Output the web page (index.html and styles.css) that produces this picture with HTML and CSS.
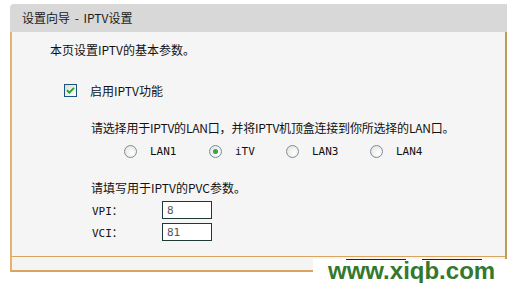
FILE: index.html
```html
<!DOCTYPE html>
<html lang="zh-CN">
  <head>
    <meta charset="UTF-8" />
    <title>设置向导 - IPTV设置</title>
    <link rel="stylesheet" href="styles.css">
  </head>
  <body>
    <div class="panel">
      <div class="head">设置向导 - IPTV设置</div>
      <div class="content">
        <p class="intro">本页设置IPTV的基本参数。</p>

        <label class="check-row">
          <svg class="check" width="13" height="13" viewBox="0 0 13 13">
            <defs>
              <linearGradient id="cb" x1="0" y1="0" x2="1" y2="1">
                <stop offset="0" stop-color="#dcdcd6" />
                <stop offset="1" stop-color="#ffffff" />
              </linearGradient>
            </defs>
            <rect x="0.5" y="0.5" width="12" height="12" fill="url(#cb)" stroke="#1c5180" />
            <path d="M3 6.2 L5.3 8.6 L10 3.9" fill="none" stroke="#21a121" stroke-width="1.8" />
          </svg>
          <span>启用IPTV功能</span>
        </label>

        <p class="hint">请选择用于IPTV的LAN口，并将IPTV机顶盒连接到你所选择的LAN口。</p>
        <div class="radios">
          <label class="radio"><span class="dot"></span>LAN1</label>
          <label class="radio"><span class="dot on"></span>iTV</label>
          <label class="radio"><span class="dot"></span>LAN3</label>
          <label class="radio"><span class="dot"></span>LAN4</label>
        </div>

        <p class="hint pvc">请填写用于IPTV的PVC参数。</p>
        <div class="field">
          <span class="field-label">VPI：</span>
          <input class="box" value="8" />
        </div>
        <div class="field">
          <span class="field-label">VCI：</span>
          <input class="box" value="81" />
        </div>
      </div>
      <div class="foot"></div>
    </div>

    <div class="mark">
      <span class="btn-edge one"></span>
      <span class="btn-edge two"></span>
      www.xiqb.com
    </div>
  </body>
</html>
```

FILE: styles.css
```css
body {
  margin: 0;
  padding: 4px 0 0 10px;
  background: #fff;
  font-family: "Noto Sans CJK SC", sans-serif;
  font-size: 12px;
  color: #111;
  position: relative;
  height: 279px;
  overflow: hidden;
}

.panel {
  width: 497px;
}

.head {
  height: 28px;
  line-height: 28px;
  padding-left: 12px;
  background: #d8d8d8;
  border-radius: 4px 0 0 0;
  color: #1a1a1a;
  word-spacing: 2px;
}

.content {
  box-sizing: border-box;
  height: 225px;
  padding: 10px 0 0 38px;
  background: #f5f5f5;
  border-left: 2px solid #e4b46a;
  border-right: 2px solid #b8a050;
  border-bottom: 1px solid #d9a462;
}

.content p {
  margin: 0;
  line-height: 16px;
}

.check-row {
  display: flex;
  align-items: center;
  gap: 13px;
  height: 16px;
  margin: 24px 0 0 14px;
}

.hint {
  margin-top: 22px !important;
  padding-left: 41px;
  letter-spacing: -0.2px;
}

.hint.pvc {
  margin-top: 21px !important;
  letter-spacing: 0;
}

.radios {
  display: grid;
  grid-template-columns: 85px 77px 84px auto;
  height: 16px;
  margin: 7px 0 0 74px;
}

.radio {
  display: flex;
  align-items: center;
  gap: 13px;
  font-family: "DejaVu Sans Mono", monospace;
  font-size: 11px;
}

.dot {
  box-sizing: border-box;
  width: 13px;
  height: 13px;
  border: 1px solid #7d8b9e;
  border-radius: 50%;
  background: radial-gradient(circle at 65% 65%, #ffffff 0%, #e9e9e4 70%, #d6d6d0 100%);
  display: flex;
  align-items: center;
  justify-content: center;
}

.dot.on::after {
  content: "";
  width: 5px;
  height: 5px;
  border-radius: 50%;
  background: #3ba33b;
}

.field {
  display: flex;
  align-items: center;
  height: 18px;
  margin: 5px 0 0 42px;
}

.field + .field {
  margin-top: 4px;
}

.field-label {
  width: 70px;
  font-family: "DejaVu Sans Mono", "Noto Sans CJK SC", monospace;
  font-size: 11px;
}

.box {
  box-sizing: border-box;
  width: 50px;
  height: 18px;
  margin: 0;
  padding: 0 4px;
  border: 1px solid #1f3a36;
  background: #fff;
  color: #555;
  font-family: "DejaVu Sans Mono", monospace;
  font-size: 11px;
}

.foot {
  box-sizing: border-box;
  height: 15px;
  background: #f4f4f2;
  border-left: 2px solid #e4b46a;
  border-right: 2px solid #b8a050;
  border-bottom: 2px solid #d9a462;
}

.mark {
  position: absolute;
  left: 313px;
  top: 259px;
  width: 195px;
  height: 24px;
  background: #fff;
  color: #34782c;
  font-family: "Liberation Sans", sans-serif;
  font-weight: bold;
  font-size: 24px;
  line-height: 24px;
  text-indent: 15px;
}

.btn-edge {
  position: absolute;
  top: 0;
  height: 1px;
  background: #222;
}

.btn-edge.one {
  left: 33px;
  width: 60px;
}

.btn-edge.two {
  left: 109px;
  width: 60px;
}
```
